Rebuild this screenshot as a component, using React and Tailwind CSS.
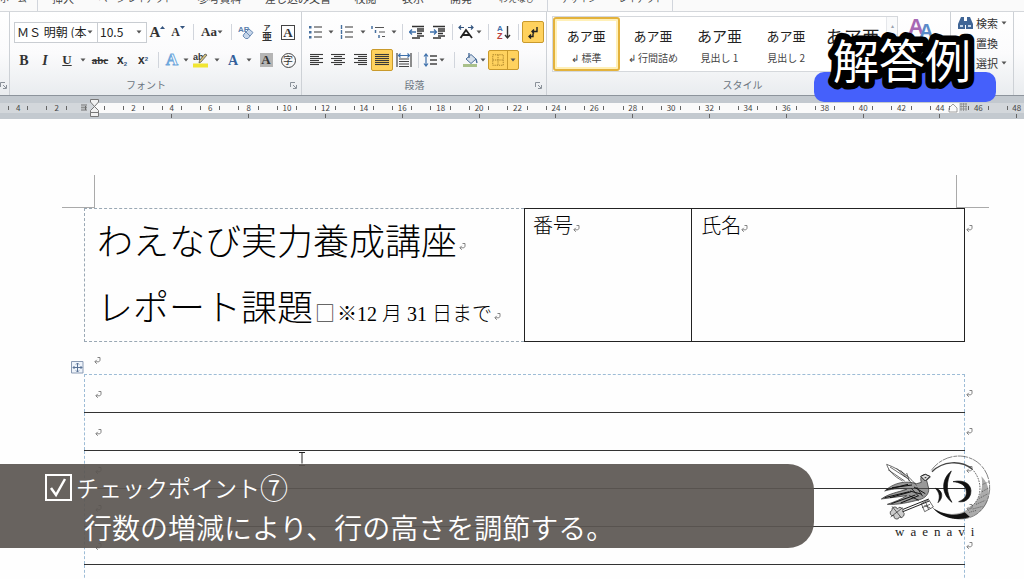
import React from 'react';

const tabs = [
  { label: 'ホーム', style: 'w-[38px] pl-0 text-[9px] justify-start border-r border-gray-300' },
  { label: '挿入', style: 'w-[50px] text-[11px]' },
  { label: 'ページ レイアウト', style: 'w-[95px] text-[9px]' },
  { label: '参考資料', style: 'w-[73px] text-[11px]' },
  { label: '差し込み文書', style: 'w-[84px] text-[11px]' },
  { label: '校閲', style: 'w-[51px] text-[11px]' },
  { label: '表示', style: 'w-[44px] text-[11px]' },
  { label: '開発', style: 'w-[52px] text-[11px]' },
  { label: 'わえなび', style: 'w-[61px] text-[9px] border-r border-gray-300' },
  { label: 'デザイン', style: 'w-[62px] text-[9px]' },
  { label: 'レイアウト', style: 'w-[63px] text-[9px] border-r border-gray-300' },
];

const styleItems = [
  { name: '標準', mark: true, active: true, sample: 'text-[13px]' },
  { name: '行間詰め', mark: true, sample: 'text-[13px]' },
  { name: '見出し 1', sample: 'text-[15px]' },
  { name: '見出し 2', sample: 'text-[13px]' },
  { name: '表題', sample: 'text-[18px]' },
];

const rulerMarks = ['4', '2', '', ...Array.from({ length: 24 }, (_, i) => String((i + 1) * 2))];

const bodyRows = [1, 2, 3, 4, 5, 6, 7];

const Caret = () => (
  <svg className="h-[4px] w-[6px] shrink-0" viewBox="0 0 6 4"><path d="M0.5 0.5h5L3 3.5z" fill="#555" /></svg>
);

const CaretButton = ({ label, className = 'w-[10px]' }) => (
  <button type="button" aria-label={label} className={`flex h-full items-center justify-center ${className}`}><Caret /></button>
);

const Tool = ({ label, className = 'w-5', children }) => (
  <button type="button" aria-label={label} className={`flex h-full shrink-0 items-center justify-center text-[#333] ${className}`}>
    {children}
  </button>
);

const Sep = ({ className = 'w-[10px]' }) => (
  <span className={`flex h-4 shrink-0 justify-center ${className}`}><span className="w-px bg-gray-300" /></span>
);

const Launcher = () => (
  <svg className="h-[7px] w-[7px]" viewBox="0 0 7 7" fill="none" stroke="#8a9199">
    <path d="M0.5 5V0.5H5M3 3l3 3M6.500 3v3.500H3" />
  </svg>
);

const Icon = ({ w = 'w-4', children }) => (
  <svg className={`h-4 ${w}`} viewBox="0 0 16 16" fill="none">{children}</svg>
);

const AlignIcon = ({ rows }) => (
  <svg className="h-[14px] w-[14px]" viewBox="0 0 14 14" stroke="#3a3a3a" strokeWidth="1.1">
    {rows.map(([a, b], i) => <path key={i} d={`M${a} ${1.5 + i * 2}H${b}`} />)}
  </svg>
);

// 段落記号
const Mark = ({ className = '' }) => (
  <svg className={`inline-block h-[9px] w-[7px] ${className}`} viewBox="0 0 7 9" fill="none" stroke="#777" strokeWidth="0.9">
    <path d="M3.500 1.500h2.500v2.500c0 1.200-.8 1.800-2 1.800H1M2.800 3.800L.8 5.800l2 2" />
  </svg>
);

const Group = ({ label, launcher, className, children }) => (
  <section className={`flex flex-col border-r border-[#cdd1d6] ${className}`}>
    {children}
    <div className="mt-auto flex h-[20px] items-center pr-1">
      <h2 className="flex-1 pr-2 text-center text-[10px] leading-none font-normal text-[#6b7580]">{label}</h2>
      {launcher && <button type="button" aria-label={`${label}の詳細`}><Launcher /></button>}
    </div>
  </section>
);

const Picker = ({ label, value, className }) => (
  <label className={`grid h-[21px] items-center border border-[#c9cdd2] bg-white ${className}`}>
    <select aria-label={label} defaultValue={value} className="col-start-1 row-start-1 h-full w-full appearance-none overflow-hidden bg-transparent pl-[2px] text-[12px] leading-none text-[#222] outline-none">
      <option>{value}</option>
    </select>
    <span className="pointer-events-none col-start-1 row-start-1 mr-1 justify-self-end"><Caret /></span>
  </label>
);

const FontGroup = () => (
  <Group label="フォント" launcher className="w-[292px] shrink-0">
    <div className="flex h-[22px] items-center pl-[4px]">
      <Picker label="フォント名" value="ＭＳ 明朝 (本" className="w-[84px]" />
      <Picker label="フォント サイズ" value="10.5" className="-ml-px w-[50px]" />
      <Tool label="拡大" className="w-[21px]">
        <span className="font-['Liberation_Serif',serif] text-[15px] font-bold">A</span>
        <svg className="mb-2 h-[4px] w-[5px]" viewBox="0 0 5 4"><path d="M2.500 0L5 3H0z" fill="#34557f" /></svg>
      </Tool>
      <Tool label="縮小" className="w-[20px]">
        <span className="font-['Liberation_Serif',serif] text-[12px] font-bold">A</span>
        <svg className="mb-2 h-[4px] w-[5px]" viewBox="0 0 5 4"><path d="M2.500 3L5 0H0z" fill="#34557f" /></svg>
      </Tool>
      <Sep />
      <Tool label="文字種の変換" className="w-7">
        <span className="font-['Liberation_Serif',serif] text-[13px] font-bold">Aa</span><Caret />
      </Tool>
      <Sep />
      <Tool label="書式のクリア">
        <Icon>
          <text x="0" y="8" fontSize="8" fontWeight="bold" fill="#5a80ad" fontFamily="Liberation Sans">AB</text>
          <path d="M6 10l5-5 4 3.500-5 6H7.500L5 12z" fill="#c6d6ea" stroke="#6d8cb5" />
          <path d="M8 8l4 4" stroke="#6d8cb5" />
        </Icon>
      </Tool>
      <Tool label="ルビ" className="w-[22px]">
        <span className="flex flex-col items-center font-bold">
          <span className="text-[7px] leading-[7px]">ア</span>
          <span className="text-[10px] leading-[10px]">亜</span>
        </span>
      </Tool>
      <Tool label="囲み線">
        <span className="h-[15px] w-[14px] border border-[#444] font-['Liberation_Serif',serif] text-[13px] leading-[13px] font-bold">A</span>
      </Tool>
    </div>
    <div className="mt-[6px] flex h-[22px] items-center pl-[4px] font-['Liberation_Serif',serif]">
      <Tool label="太字"><b className="text-[14px]">B</b></Tool>
      <Tool label="斜体" className="w-[22px]"><i className="text-[14px] font-bold">I</i></Tool>
      <Tool label="下線" className="w-[22px]"><span className="text-[13px] font-bold underline">U</span></Tool>
      <CaretButton label="下線の種類" />
      <Tool label="取り消し線" className="w-6"><span className="text-[11px] font-bold line-through">abc</span></Tool>
      <Tool label="下付き"><span className="font-['Liberation_Sans',sans-serif] text-[12px] font-bold">x<sub className="text-[6px] text-[#34557f]">2</sub></span></Tool>
      <Tool label="上付き" className="w-[22px]"><span className="font-['Liberation_Sans',sans-serif] text-[12px] font-bold">x<sup className="text-[6px] text-[#34557f]">2</sup></span></Tool>
      <Sep className="w-2" />
      <Tool label="文字の効果"><span className="text-[17px] font-bold text-white [-webkit-text-stroke:1px_#6fa8dc]">A</span></Tool>
      <CaretButton label="文字の効果の一覧" className="w-2" />
      <Tool label="蛍光ペン" className="w-[22px]">
        <Icon>
          <text x="0" y="8" fontSize="9" fontWeight="bold" fill="#333" fontFamily="Liberation Sans">ab</text>
          <path d="M14 3L8 10l-2 1 .5-2.500L12 2z" fill="#d8c47a" stroke="#555" strokeWidth=".8" />
          <path d="M0 11.500h15v4H0z" fill="#f1e532" />
        </Icon>
      </Tool>
      <CaretButton label="蛍光ペンの色" />
      <Tool label="フォントの色" className="w-[22px]"><span className="text-[14px] font-bold text-[#34609b]">A</span></Tool>
      <CaretButton label="フォントの色の一覧" />
      <Tool label="網かけ" className="w-6"><span className="h-[14px] w-[13px] bg-[#b5b5b5] text-[13px] leading-[14px] font-bold">A</span></Tool>
      <Tool label="囲い文字">
        <span className="flex h-[15px] w-[15px] items-center justify-center rounded-full border border-[#444] font-['Noto_Sans_CJK_JP',sans-serif] text-[10px] leading-none">字</span>
      </Tool>
    </div>
  </Group>
);

const ListIcon = ({ numbered }) => (
  <Icon>
    {[3, 8, 13].map(y => (
      <React.Fragment key={y}>
        {numbered ? <path d={`M2.500 ${y - 2}v4`} stroke="#47709f" strokeWidth="1.400" /> : <rect x="1" y={y - 1} width="2.500" height="2.500" fill="#47709f" />}
        <path d={`M6 ${y}h8`} stroke="#555" strokeWidth="1.200" />
      </React.Fragment>
    ))}
  </Icon>
);

const IndentIcon = ({ right }) => (
  <Icon>
    <path d="M3 2.500h12M8 5h7M8 7h7M8 9.500h5M8 12h7M3 14h8" stroke="#333" strokeWidth="1.400" />
    <path d={right ? 'M0 8h6M4 5.500L6.500 8 4 10.500' : 'M1 8h6M3 5.500L.5 8 3 10.500'} stroke="#3e70ab" strokeWidth="1.300" />
  </Icon>
);

const activeTool = 'rounded-[2px] border border-[#c99a2c] bg-[#ffd25e]';

const ParagraphGroup = () => (
  <Group label="段落" launcher className="w-[245px] shrink-0">
    <div className="flex h-[22px] items-center pl-[4px]">
      <Tool label="箇条書き"><ListIcon /></Tool>
      <CaretButton label="行頭文字" />
      <Tool label="段落番号" className="w-[22px]"><ListIcon numbered /></Tool>
      <CaretButton label="番号書式" />
      <Tool label="アウトライン" className="w-[22px]">
        <Icon>
          <path d="M1 2v3M4.500 6v3M8 11v3" stroke="#47709f" strokeWidth="1.500" />
          <path d="M4 3.500h9M8 8h6M11 12.500h3" stroke="#555" strokeWidth="1.200" />
        </Icon>
      </Tool>
      <CaretButton label="アウトラインの一覧" className="w-2" />
      <Sep className="w-[8px]" />
      <Tool label="インデントを減らす" className="w-[22px]"><IndentIcon /></Tool>
      <Tool label="インデントを増やす"><IndentIcon right /></Tool>
      <Sep className="w-[8px]" />
      <Tool label="拡張書式">
        <Icon>
          <path d="M2.500 14L8 6l6 8M4 11h8" stroke="#222" strokeWidth="1.800" />
          <path d="M1 3.500h5M3 1.500L1 3.500l2 2M10 3.500h5M13 1.500l2 2-2 2" stroke="#34557f" strokeWidth="1.200" />
        </Icon>
      </Tool>
      <CaretButton label="拡張書式の一覧" className="w-[6px]" />
      <Sep className="w-[12px]" />
      <Tool label="並べ替え">
        <Icon>
          <text x="1" y="7" fontSize="8" fontWeight="bold" fill="#3e70ab" fontFamily="Liberation Sans">A</text>
          <text x="1" y="15" fontSize="9" fontWeight="bold" fill="#b8413f" fontFamily="Liberation Sans">Z</text>
          <path d="M11.500 2v11M9 11l2.500 3 2.500-3" stroke="#333" strokeWidth="1.400" />
        </Icon>
      </Tool>
      <Sep className="w-[8px]" />
      <Tool label="編集記号の表示" className={`w-[22px] ${activeTool}`}>
        <Icon><path d="M12 3v4.500H7M9 5.500L7 7.500l2 2M8 9.500v3H4M6 10.500L4 12.500l2 2" stroke="#222" strokeWidth="1.400" /></Icon>
      </Tool>
    </div>
    <div className="mt-[6px] flex h-[22px] items-center pl-[4px]">
      <Tool label="左揃え" className="w-[21px]"><AlignIcon rows={[[0, 13], [0, 9], [0, 13], [0, 9], [0, 13], [0, 9]]} /></Tool>
      <Tool label="中央揃え" className="w-[22px]"><AlignIcon rows={[[0, 14], [3, 11], [0, 14], [3, 11], [0, 14], [3, 11]]} /></Tool>
      <Tool label="右揃え" className="w-[22px]"><AlignIcon rows={[[1, 14], [5, 14], [1, 14], [5, 14], [1, 14], [5, 14]]} /></Tool>
      <Tool label="両端揃え" className={`w-[22px] ${activeTool}`}><AlignIcon rows={[[0, 14], [0, 14], [0, 14], [0, 14], [0, 14], [0, 14]]} /></Tool>
      <Tool label="均等割り付け" className="w-[21px]">
        <Icon>
          <path d="M1 1v14M15 1v14M3 7h10M3 9.500h10M3 12h10M3 14.500h10" stroke="#444" strokeWidth="1.200" />
          <path d="M2 3.500h12M4.500 1.500l-2 2 2 2M11.500 1.500l2 2-2 2" stroke="#3e70ab" strokeWidth="1.200" />
        </Icon>
      </Tool>
      <Sep className="w-[8px]" />
      <Tool label="行間" className="w-[24px]">
        <Icon>
          <path d="M3 2v12M1 4.500L3 2l2 2.500M1 11.500L3 14l2-2.500" stroke="#3e70ab" strokeWidth="1.200" />
          <path d="M7 4h7M7 8h7M7 12h7" stroke="#444" strokeWidth="1.400" />
        </Icon>
        <Caret />
      </Tool>
      <Sep className="w-[16px]" />
      <Tool label="塗りつぶし" className="w-[16px]">
        <Icon>
          <path d="M1 12h14v3H1z" fill="#a9c08a" />
          <path d="M4 7l5-4.500L14 7l-5 4.500z" fill="#d5dfea" stroke="#4a6e9a" />
          <path d="M7 1v5M14 7l1 4" stroke="#4a6e9a" strokeWidth="1.400" />
        </Icon>
      </Tool>
      <CaretButton label="塗りつぶしの色" />
      <div className={`flex h-[20px] w-[31px] ${activeTool}`}>
        <Tool label="罫線" className="flex-1 border-r border-[#c99a2c]">
          <Icon w="w-[14px]"><path d="M2 2h12v12H2zM8 2v12M2 8h12" stroke="#a27c24" strokeDasharray="1.500 1" /></Icon>
        </Tool>
        <CaretButton label="罫線の種類" />
      </div>
    </div>
  </Group>
);

const StylesGroup = () => (
  <Group label="スタイル" className="min-w-0 flex-1">
    <div className="mt-[-5px] flex h-[56px] pl-[5px]">
      <div className="flex min-w-0 flex-1 border border-[#d5d8dc] bg-white">
        <div className="grid min-w-0 flex-1 grid-cols-5">
          {styleItems.map(item => (
            <button
              key={item.name}
              type="button"
              className={`flex min-w-0 flex-col items-center justify-center overflow-hidden border-2 pt-[4px] whitespace-nowrap text-[#222] ${item.active ? 'rounded-[3px] border-[#e3b23c] shadow-[inset_0_0_0_2px_#fff0b8]' : 'border-transparent'}`}
            >
              <span className={`h-[22px] leading-[22px] ${item.sample}`}>あア亜</span>
              <span className="h-[20px] text-[10px] leading-[22px] text-[#444]">{item.mark && '↲ '}{item.name}</span>
            </button>
          ))}
        </div>
        <button type="button" aria-label="上へ" className="flex h-[18px] w-[11px] shrink-0 items-center justify-center border-b border-l border-gray-200 bg-gray-50 text-[6px] text-gray-400">▴</button>
      </div>
      <button type="button" aria-label="スタイルの変更" className="w-[52px] shrink-0 self-start pl-[9px]">
        <svg className="h-[30px] w-[30px]" viewBox="0 0 30 30" fontFamily="Liberation Sans" fontWeight="bold">
          <text x="1" y="18" fontSize="22" fill="#a768b4">A</text>
          <text x="12" y="22" fontSize="20" fill="#5b8bc9">A</text>
        </svg>
      </button>
    </div>
  </Group>
);

const EditGroup = () => (
  <Group label="編集" className="w-[63px] shrink-0">
    <div className="flex flex-col pl-[7px] text-[11px] text-[#333]">
      <button type="button" className="mt-[-8px] flex h-[20px] items-center gap-[3px]">
        <svg className="h-[14px] w-[15px]" viewBox="0 0 15 14" fill="#3f6596">
          <path d="M3 1h3v4l1 2v6H0V8zM9 1h3l3 7v5H8V7l1-2z" /><path d="M6 5h3v4H6z" /><path d="M2 9h3v2H2zM10 9h3v2h-3z" fill="#c4d5e8" />
        </svg>
        検索<Caret />
      </button>
      <button type="button" className="h-[20px] pl-[18px] text-left">置換</button>
      <button type="button" className="flex h-[20px] items-center gap-[3px] pl-[18px]">選択<Caret /></button>
    </div>
  </Group>
);

const Ruler = () => (
  <div className="relative h-[24px] shrink-0 overflow-hidden border-t border-[#8d949c] bg-[#c3c9cf] pt-[7px]">
    <div className="-ml-px flex w-[calc(100%+13px)]">
      {rulerMarks.map((n, i) => {
        const edge = i < 2 || i > 24;
        return (
          <div key={i} className="min-w-0 flex-1">
            <div className={`flex h-[10px] items-center justify-between px-[9px] ${edge ? 'bg-[#d3d7db]' : i === 2 ? 'bg-[linear-gradient(90deg,#d3d7db_50%,#fafafa_50%)]' : 'bg-[#fafafa]'}`}>
              <span className="h-[4px] w-px bg-[#666]" />
              <span className="text-[8px] leading-none text-[#444]">{n}</span>
              <span className="h-[4px] w-px bg-[#666]" />
            </div>
            {i > 2 && i % 2 === 0 && <div className="mx-auto mt-px h-[4px] w-px bg-[#666]" />}
          </div>
        );
      })}
    </div>
    <svg className="absolute top-[3px] left-[89px] h-[19px] w-[11px]" viewBox="0 0 11 19" fill="#f1f1f1" stroke="#777">
      <path d="M1.500 .5h8v2.500L5.500 7.500l-4-4.500zM5.500 7.500l4 4v2h-8v-2zM1.500 13.500h8v4h-8z" />
    </svg>
    <svg className="absolute top-[7px] left-[81px] h-[9px] w-[6px]" viewBox="0 0 6 9" stroke="#777"><path d="M0 2h6M0 4.500h6M0 7h6M1 1v7M3 1v7M5 1v7" strokeWidth=".6" /></svg>
    <svg className="absolute top-[5px] right-[56px] h-[12px] w-[22px]" viewBox="0 0 22 12" fill="none" stroke="#888">
      <path d="M3 11V7l4-4 4 4v4zM14 3h7M14 5.500h7M14 8h7M15 2v8M17.500 2v8M20 2v8" strokeWidth=".8" />
    </svg>
  </div>
);

const Logo = () => (
  <figure className="absolute right-[24px] bottom-[39px] w-[130px]">
    <svg className="h-[100px] w-[130px]" viewBox="0 0 390 300" fill="none" stroke="#222" role="img" aria-label="waenavi">
      <path d="M184 76C218 28 290 16 334 62C372 104 366 172 322 206C292 228 248 226 222 206" stroke="#444" strokeWidth="2" strokeDasharray="30 3 12 2" />
      <path d="M186 80C218 48 272 44 306 72" strokeWidth="4" stroke="#444" />
      <path d="M306 72C340 106 338 166 298 188" strokeWidth="2" strokeDasharray="5 3" />
      <path d="M188 188C224 214 272 212 300 188C330 164 342 128 334 94C372 132 358 182 322 206C276 234 218 222 188 188Z" fill="#666" fillOpacity=".55" stroke="none" />
      <path d="M188 188C220 212 262 214 284 202L300 216C258 230 212 218 188 188Z" fill="#111" stroke="none" />
      <path d="M318 178l28-12M308 192l30-8M328 160l26-14M336 140l22-12M298 202l22-6M338 118l20-8" stroke="#333" strokeWidth="2" strokeDasharray="3 3" />
      <path d="M244 78C214 102 212 146 246 172C228 144 228 110 244 78Z" fill="#111" stroke="#111" strokeWidth="2" />
      <path d="M249 110C284 102 308 120 302 146C298 164 282 173 266 170C286 162 292 150 288 134C284 118 268 112 249 110Z" fill="#111" stroke="#111" strokeWidth="2" />
      <path d="M196 130C218 134 222 158 204 173C210 158 210 144 196 130Z" fill="#111" stroke="#111" strokeWidth="2" />
      <path d="M140 122C124 102 98 76 50 58C56 78 72 94 98 108M60 66l52 34M54 74l50 34M92 76l34 40M80 70l26 26M110 84l8 24" strokeWidth="2" />
      <path d="M140 116C108 106 72 112 44 138C72 130 94 130 110 133C82 142 56 146 34 162C60 158 84 156 110 152C92 164 74 170 52 178C84 180 118 172 148 164C166 160 178 146 176 130L170 106L181 96L166 88C152 90 150 100 154 112Z" fill="#555" fillOpacity=".6" strokeWidth="2" />
      <path d="M50 134l64-16M66 128l60-8M44 158l74-18M60 158l64-18M64 176l72-26M92 174l54-22M120 138l36 10M132 126l34 20M118 152l28 14" stroke="#111" strokeWidth="3" />
      <path d="M152 94l14-6 14 6-14 14zM164 98h5M124 130l22 24M140 126l18 28" strokeWidth="3" fill="#ddd" />
      <path d="M82 200L176 162M84 206L178 168" strokeWidth="3" />
      <path d="M154 176l22-12 14 22-26 14zM163 181l18 8M168 174l8 20M156 188l24-10" strokeWidth="2" />
      <path d="M66 196a8 8 0 1 1 16-4a8 8 0 1 1 16 8a8 8 0 1 1-10 16a8 8 0 1 1-16-4a8 8 0 1 1-6-16ZM66 184l28 34M98 188l-36 28" fill="#ccc" strokeWidth="2" />
    </svg>
    <figcaption className="-mt-[21px] pl-[25px] font-['Liberation_Serif',serif] text-[13px] leading-[16px] tracking-[6px] text-[#222]">waenavi</figcaption>
  </figure>
);

const App = () => {
  return (
    <div className="relative flex h-screen flex-col overflow-hidden bg-[#fefefe] font-['Noto_Sans_CJK_JP',sans-serif]">
      <nav className="flex h-[12px] shrink-0 items-end overflow-hidden border-b border-[#d4d7db] bg-[#fafafa]">
        {tabs.map(tab => (
          <button key={tab.label} type="button" className={`flex h-[22px] shrink-0 items-center justify-center pb-[4px] leading-none whitespace-nowrap text-[#444] ${tab.style}`}>
            {tab.label}
          </button>
        ))}
      </nav>

      <header className="flex h-[83px] shrink-0 bg-linear-to-b from-white via-[#fbfbfc] to-[#e9ecef]">
        <div className="flex w-[10px] items-end border-r border-[#cdd1d6] pb-[6px]"><Launcher /></div>
        <div className="flex min-w-0 flex-1 *:pt-[9px]">
          <FontGroup />
          <ParagraphGroup />
          <StylesGroup />
          <EditGroup />
        </div>
        <div className="w-[10px]" />
      </header>

      <Ruler />

      <main className="pl-[84px] font-['Liberation_Serif','Noto_Sans_CJK_JP',serif] font-light text-black">
        {/* 余白の角 */}
        <div className="-ml-[22px] flex justify-between pt-[56px] pr-[35px]">
          <span className="h-[33px] w-[33px] border-r border-b border-[#aaa]" />
          <span className="h-[33px] w-[33px] border-b border-l border-[#aaa]" />
        </div>

        <div className="flex">
          <table className="flex-1 table-fixed border-collapse">
            <colgroup><col className="w-[50%]" /><col className="w-[19%]" /><col className="w-[31%]" /></colgroup>
            <tbody>
              <tr className="h-[133px] align-top">
                <td className="border border-dashed border-[#9aa8b4] pt-px pl-[12px] whitespace-nowrap">
                  <h1 className="h-[66px] text-[36px] leading-[66px] font-light">わえなび実力養成講座<Mark className="ml-[2px]" /></h1>
                  <p className="h-[65px] text-[36px] leading-[66px]">
                    レポート課題
                    <span className="text-[20px] leading-none">
                      <span className="mx-[2px] font-['Noto_Sans_CJK_JP',sans-serif] font-normal text-[#444]">□</span>
                      <span className="font-['Noto_Sans_CJK_JP',sans-serif]">※</span>
                      12 月 31 日まで<Mark className="ml-[2px]" />
                    </span>
                  </p>
                </td>
                <td className="border border-[#222] pl-[8px] text-[20px] leading-[34px]">番号<Mark /></td>
                <td className="border border-[#222] pl-[9px] text-[20px] leading-[34px]">氏名<Mark /></td>
              </tr>
            </tbody>
          </table>
          <div className="w-[59px] pt-[7px] pl-px"><Mark /></div>
        </div>

        <div className="-ml-[13px] flex h-[32px] items-end">
          <svg className="h-[13px] w-[13px]" viewBox="0 0 13 13" fill="none" stroke="#5a7396">
            <path d="M.5 .5h11.500v11.500H.5z" fill="#eef3fa" stroke="#8b9bb4" />
            <path d="M6.500 2v9M2 6.500h9M5 3.500L6.500 2 8 3.500M5 9.500L6.500 11 8 9.500M3.500 5L2 6.500 3.500 8M9.500 5L11 6.500 9.500 8" />
          </svg>
          <Mark className="mb-[9px] ml-[10px]" />
        </div>

        <div className="flex">
          <table className="flex-1 border-collapse border border-dashed border-[#9dbcd6]">
            <tbody>
              {bodyRows.map(row => (
                <tr key={row} className="h-[38px] border-b border-solid border-[#333]">
                  <td className="pl-[10px] text-[10px] leading-[10px]"><Mark /></td>
                </tr>
              ))}
            </tbody>
          </table>
          <div className="w-[59px] pl-px">
            {bodyRows.map(row => (
              <div key={row} className="flex h-[38px] items-center"><Mark /></div>
            ))}
          </div>
        </div>
      </main>

      {/* マウスポインター */}
      <svg className="absolute top-[451px] left-[298px] h-[16px] w-[8px]" viewBox="0 0 8 16" fill="none" stroke="#222">
        <path d="M1 1.500h6M4 1.500v11M1 14.500h6" />
      </svg>

      <Logo />

      <aside className="absolute right-[210px] bottom-[31px] left-0 h-[84px] rounded-r-[26px] bg-[#5b5651]/92 pt-[3px] font-[350] text-white">
        <label className="flex h-[40px] items-center pl-[45px] text-[23px] leading-[40px]">
          <span className="mr-[4px] grid h-[27px] w-[27px]">
            <input type="checkbox" defaultChecked className="col-start-1 row-start-1 h-full w-full appearance-none border-2 border-white" />
            <svg className="pointer-events-none col-start-1 row-start-1" viewBox="0 0 27 27" fill="none" stroke="white" strokeWidth="2.500"><path d="M6 14l5 7L20 5" /></svg>
          </span>
          チェックポイント<span className="text-[28px]">⑦</span>
        </label>
        <p className="pl-[84px] text-[28px] leading-[40px] whitespace-nowrap">行数の増減により、行の高さを調節する。</p>
      </aside>

      {/* 右上のテロップ */}
      <div className="absolute top-[32px] right-[28px] w-[182px]">
        <div className="mt-[40px] h-[30px] rounded-[10px] bg-[#4560fb]" />
        <svg className="absolute top-0 left-[9px] h-[60px] w-[162px]" viewBox="0 0 162 60" role="img" aria-label="解答例">
          <text x="10" y="46" fontSize="46" fill="#fff" stroke="#000" strokeWidth="13" strokeLinejoin="round" paintOrder="stroke">解答例</text>
        </svg>
      </div>
    </div>
  );
};

export default App;
